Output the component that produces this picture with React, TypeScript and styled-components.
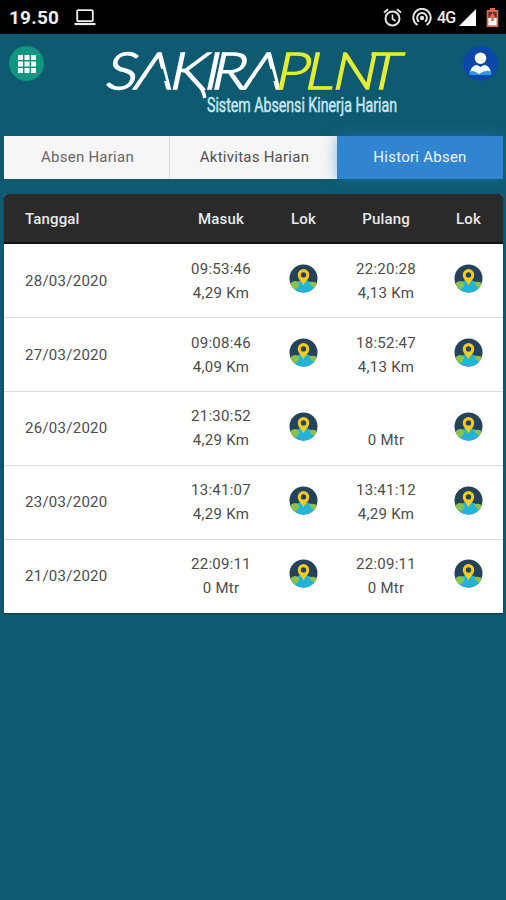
import React from "react";
import styled, { createGlobalStyle } from "styled-components";

const GlobalStyle = createGlobalStyle`
  * { box-sizing: border-box; }
  body { margin: 0; background: #0e5a70; font-family: Roboto, sans-serif; }
`;

const Screen = styled.div`
  width: 506px;
  height: 900px;
  overflow: hidden;
  background: #0e5a70;
  display: flex;
  flex-direction: column;
`;

const StatusBar = styled.div`
  height: 34px;
  flex: none;
  background: #000;
  color: #eee;
  display: flex;
  align-items: center;
  justify-content: space-between;
  padding: 1px 7px 0 9px;
`;

const StatusGroup = styled.div<{ $gap: number }>`
  display: flex;
  align-items: center;
  gap: ${(p) => p.$gap}px;
`;

const Clock = styled.span`
  font-size: 19px;
  font-weight: 700;
  letter-spacing: 0.2px;
`;

const Network = styled.span`
  font-size: 16px;
  font-weight: 500;
  width: 18px;
  letter-spacing: -0.9px;
  white-space: nowrap;
  margin: 0 -6px 0 -5px;
`;

const Header = styled.header`
  height: 102px;
  flex: none;
  display: flex;
  justify-content: space-between;
  align-items: flex-start;
  padding: 12px 8px 0 9px;
`;

const RoundButton = styled.button<{ $color: string }>`
  width: 35px;
  height: 35px;
  border: 0;
  border-radius: 50%;
  padding: 0;
  background: ${(p) => p.$color};
  display: grid;
  place-items: center;
`;

const LogoSvg = styled.svg`
  display: block;
  overflow: visible;
`;

const Tabs = styled.nav`
  display: grid;
  grid-template-columns: 166px 167px 166px;
  height: 43px;
  flex: none;
  margin: 0 3px 15px 4px;
`;

const Tab = styled.button<{ $active?: boolean; $dim?: boolean }>`
  border: 0;
  padding: 0 0 2px ${(p) => (p.$active ? 0 : 2)}px;
  font: 400 15px Roboto, sans-serif;
  letter-spacing: 0.25px;
  color: ${(p) => (p.$active ? "#eef6ff" : p.$dim ? "#666" : "#505050")};
  background: ${(p) => (p.$active ? "#3185d0" : "#f6f6f6")};
  box-shadow: ${(p) => (p.$active ? "0 0 14px rgba(40, 125, 195, 0.55)" : "none")};
  z-index: ${(p) => (p.$active ? 1 : 0)};
  border-right: ${(p) => (p.$dim ? "1px solid #dcdcdc" : "0")};
`;

const Table = styled.section`
  margin: 0 3px 0 4px;
  background: #fff;
  border-radius: 4px 4px 0 0;
  overflow: hidden;
  box-shadow: 0 1px 2px rgba(0, 0, 0, 0.4);
`;

const Row = styled.div`
  display: grid;
  grid-template-columns: 176px 82px 83px 82px 76px;
  align-items: center;
  height: 73.9px;
  padding-top: 0.4px;
  color: #4c4c4c;
  font-size: 15px;
  letter-spacing: 0.27px;
  border-bottom: 1px solid #dedede;
  &:last-child {
    border-bottom: 0;
    padding: 0 0 2px;
  }
`;

const HeadRow = styled(Row)`
  height: 50px;
  padding-top: 2px;
  background: #2a2a2a;
  color: #e8e8e8;
  font-weight: 500;
  letter-spacing: 0.15px;
  border-bottom: 2px solid #111;
`;

const Cell = styled.div<{ $kind?: "date" | "last" }>`
  text-align: ${(p) => (p.$kind === "date" ? "left" : "center")};
  padding-left: ${(p) => (p.$kind === "date" ? 21 : p.$kind === "last" ? 7 : 0)}px;
  line-height: 24px;
  white-space: nowrap;
`;

const Time = styled.div`
  height: 24px;
`;

const PinSvg = styled.svg`
  display: block;
  margin: -4px auto 0;
`;

const Pin = () => (
  <PinSvg width="29" height="29" viewBox="0 0 29 29">
    <defs>
      <clipPath id="disc"><circle cx="14.5" cy="14.5" r="14" /></clipPath>
    </defs>
    <g clipPath="url(#disc)">
      <rect width="29" height="29" fill="#24435b" />
      <circle cx="14.5" cy="30" r="14" fill="#22b4d8" />
      <path d="M1 20 Q4 16 8 17.5 L10.5 19.5 Q10 23 6.5 25.5 L3 25Z" fill="#8bc34a" />
      <path d="M20 19 Q22 16.5 28 19 L26.5 23.5 L23.5 23Z" fill="#8bc34a" />
    </g>
    <path d="M14.5 21.5 C13 17.5 8.8 15.7 8.8 10.8 A5.7 5.7 0 0 1 20.2 10.8 C20.2 15.7 16 17.5 14.5 21.5Z" fill="#f4cb20" />
    <circle cx="14.5" cy="10.9" r="2.7" fill="#24435b" />
  </PinSvg>
);

const Logo = () => (
  <LogoSvg width="304" height="76" viewBox="103 46 304 76">
    <g transform="translate(0 90) skewX(-12) translate(0 -90)">
      <g transform="scale(1.15 1)" fontFamily="Lato, sans-serif" fontWeight="300" fontSize="51" strokeWidth="1.5">
        <text y="89.5" x="91 116.1 146.4 176.4 182.6 210.9" fill="#fff" stroke="#fff">SAKIRA</text>
        <text y="89.5" x="238.3 263.8 288 317.3" fill="#e4ed31" stroke="#e4ed31" strokeWidth="1.3">PLNT</text>
      </g>
      <path d="M147.7 69 H159.5 L165.3 81 H141.9Z M256.7 69 H268.5 L274.3 81 H250.9Z" fill="#0e5a70" />
      <path d="M198 84 Q204 89 207.5 98" stroke="#fff" strokeWidth="3.4" fill="none" />
    </g>
    <text x="208" y="111.5" fontFamily="Roboto, sans-serif" fontWeight="400" fontSize="19.5" fill="#c9e7ef" stroke="#c9e7ef" strokeWidth="0.5" textLength="190" lengthAdjust="spacingAndGlyphs">Sistem Absensi Kinerja Harian</text>
  </LogoSvg>
);

const rows = [
  { date: "28/03/2020", inn: "09:53:46", inKm: "4,29 Km", out: "22:20:28", outKm: "4,13 Km" },
  { date: "27/03/2020", inn: "09:08:46", inKm: "4,09 Km", out: "18:52:47", outKm: "4,13 Km" },
  { date: "26/03/2020", inn: "21:30:52", inKm: "4,29 Km", out: "", outKm: "0 Mtr" },
  { date: "23/03/2020", inn: "13:41:07", inKm: "4,29 Km", out: "13:41:12", outKm: "4,29 Km" },
  { date: "21/03/2020", inn: "22:09:11", inKm: "0 Mtr", out: "22:09:11", outKm: "0 Mtr" },
];

export default function App() {
  return (
    <Screen>
      <GlobalStyle />
      <StatusBar>
        <StatusGroup $gap={15}>
          <Clock>19.50</Clock>
          <svg width="22" height="17" viewBox="0 0 22 17" fill="none" stroke="#eee">
            <rect x="3.2" y="1.2" width="15.6" height="11" rx="1" strokeWidth="1.8" />
            <path d="M0.5 15 H21.5" strokeWidth="2.2" />
          </svg>
        </StatusGroup>
        <StatusGroup $gap={10}>
          <svg width="19" height="19" viewBox="0 0 19 19" fill="none" stroke="#e4e4e4" strokeWidth="2">
            <circle cx="9.5" cy="10.5" r="7" />
            <path d="M9.5 6.5 V11 L12.5 13" strokeWidth="1.6" />
            <path d="M1 4.5 L5 1.3 M18 4.5 L14 1.3" />
          </svg>
          <svg width="20" height="19" viewBox="0 0 20 19" fill="none" stroke="#e4e4e4" strokeWidth="2">
            <path d="M5.5 17 A8.7 8.7 0 1 1 14.5 17" />
            <path d="M7 13.8 A4.9 4.9 0 1 1 13 13.8" />
            <circle cx="10" cy="10" r="2.2" fill="#e4e4e4" stroke="none" />
          </svg>
          <Network>4G</Network>
          <svg width="17" height="17" viewBox="0 0 17 17"><path d="M17 0 V17 H0Z" fill="#fff" /></svg>
          <svg width="13" height="19" viewBox="0 0 13 19">
            <path d="M4 0 H9 V2 H12.3 V19 H0.7 V2 H4Z" fill="#d96a50" />
            <path d="M2.4 10 H10.6 V17.3 H2.4Z" fill="#fff" />
            <path d="M2.4 4 H10.6 V10 H2.4Z" fill="#56352f" />
            <path d="M6.5 4.5 L10 10 H7.8 V13 H5.2 V10 H3Z" fill="#d96a50" />
          </svg>
        </StatusGroup>
      </StatusBar>
      <Header>
        <RoundButton $color="#109581" aria-label="Menu">
          <svg width="18" height="18" viewBox="0 0 18 18" fill="#fff">
            {[0, 6.5, 13].map((y) =>
              [0, 6.5, 13].map((x) => <rect key={`${x}-${y}`} x={x} y={y} width="5" height="5" />)
            )}
          </svg>
        </RoundButton>
        <Logo />
        <RoundButton $color="#0b47a8" aria-label="Profil">
          <svg width="23" height="24" viewBox="0 0 23 24">
            <circle cx="11.5" cy="6.2" r="5.8" fill="#fff" />
            <path d="M1 22 C1 16 5 13 8 13 L11.5 15 L15 13 C18 13 22 16 22 22Z" fill="#fff" />
            <path d="M0.5 20 Q4 17.5 10 22 Q17 17 22.5 19.5 V23 H0.5Z" fill="#3296df" />
          </svg>
        </RoundButton>
      </Header>
      <Tabs>
        <Tab $dim>Absen Harian</Tab>
        <Tab>Aktivitas Harian</Tab>
        <Tab $active>Histori Absen</Tab>
      </Tabs>
      <Table>
        <HeadRow>
          <Cell $kind="date">Tanggal</Cell>
          <Cell>Masuk</Cell>
          <Cell>Lok</Cell>
          <Cell>Pulang</Cell>
          <Cell $kind="last">Lok</Cell>
        </HeadRow>
        {rows.map((r) => (
          <Row key={r.date}>
            <Cell $kind="date">{r.date}</Cell>
            <Cell><Time>{r.inn}</Time>{r.inKm}</Cell>
            <Cell><Pin /></Cell>
            <Cell><Time>{r.out}</Time>{r.outKm}</Cell>
            <Cell $kind="last"><Pin /></Cell>
          </Row>
        ))}
      </Table>
    </Screen>
  );
}
